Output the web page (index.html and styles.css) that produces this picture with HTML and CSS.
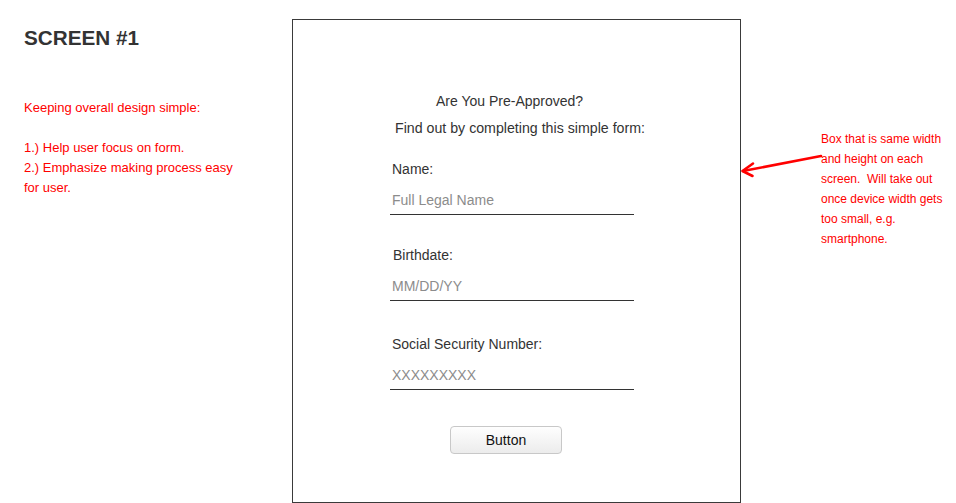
FILE: index.html
```html
<!DOCTYPE html>
<html lang="en">
<head>
<meta charset="utf-8">
<title>Screen #1</title>
<link rel="stylesheet" href="styles.css">
</head>
<body>
<div class="page">
  <aside class="left">
    <h1 class="screen-title">SCREEN #1</h1>
    <p class="note">Keeping overall design simple:<br><br>1.) Help user focus on form.<br>2.) Emphasize making process easy<br>for user.</p>
  </aside>
  <main class="frame">
    <p class="form-title">Are You Pre-Approved?</p>
    <p class="form-sub">Find out by completing this simple form:</p>
    <form class="form">
      <label class="field-label field-first" for="name">Name:</label>
      <input class="field-input" id="name" type="text" placeholder="Full Legal Name">
      <label class="field-label field-bd" for="bd">Birthdate:</label>
      <input class="field-input field-input-bd" id="bd" type="text" placeholder="MM/DD/YY">
      <label class="field-label field-ssn" for="ssn">Social Security Number:</label>
      <input class="field-input" id="ssn" type="text" placeholder="XXXXXXXXX">
      <button class="btn" type="button">Button</button>
    </form>
  </main>
  <aside class="right">
    <p class="note note-right">Box that is same width<br>and height on each<br>screen.&nbsp; Will take out<br>once device width gets<br>too small, e.g.<br>smartphone.</p>
  </aside>
  <svg class="arrow" width="90" height="34" viewBox="735 150 90 34" aria-hidden="true">
    <line x1="821" y1="156" x2="743" y2="171" stroke="#f00" stroke-width="2.6" stroke-linecap="round"/>
    <polyline points="753,163.5 742.5,171 752.5,176" fill="none" stroke="#f00" stroke-width="2.6" stroke-linecap="round" stroke-linejoin="round"/>
  </svg>
</div>
</body>
</html>
```
FILE: styles.css
```css
html, body {
  margin: 0;
  padding: 0;
  background: #fff;
}

body {
  font-family: "Liberation Sans", Arial, sans-serif;
  color: #333;
  width: 956px;
  height: 503px;
  overflow: hidden;
}

.page {
  position: relative;
  display: flex;
  align-items: flex-start;
  padding-left: 24px;
}

.left {
  width: 268px;
  flex: none;
}

.screen-title {
  margin: 26px 0 0;
  font-size: 20.7px;
  line-height: 24px;
  font-weight: bold;
  color: #333;
}

.note {
  margin: 48px 0 0;
  font-size: 13px;
  line-height: 20px;
  color: #f00;
}

.frame {
  flex: none;
  box-sizing: border-box;
  width: 449px;
  height: 484px;
  margin-top: 19px;
  border: 1px solid #3a3a3a;
  padding-top: 71px;
}

.form-title,
.form-sub {
  margin: 0;
  font-size: 14px;
  line-height: 20px;
  color: #333;
}

.form-title {
  padding-left: 143px;
}

.form-sub {
  margin-top: 7px;
  padding-left: 102px;
  font-size: 14.2px;
}

.form {
  display: flex;
  flex-direction: column;
  align-items: flex-start;
  padding-left: 97px;
}

.field-label {
  display: block;
  font-size: 14px;
  line-height: 20px;
  color: #333;
  padding-left: 2px;
}

.field-first { margin-top: 21px; }
.field-bd { margin-top: 30px; padding-left: 3px; }
.field-ssn { margin-top: 33px; }

.field-input {
  display: block;
  box-sizing: content-box;
  width: 242px;
  height: 28px;
  margin: 7px 0 0;
  padding: 0 0 0 2px;
  border: 0;
  border-bottom: 1px solid #333;
  background: transparent;
  font-family: "Liberation Sans", Arial, sans-serif;
  font-size: 14px;
  color: #333;
  outline: none;
}

.field-input-bd {
  margin-top: 6px;
  height: 29px;
}

.field-input::placeholder {
  color: #8c8c8c;
  opacity: 1;
}

.btn {
  margin: 36px 0 0 60px;
  box-sizing: border-box;
  width: 112px;
  height: 28px;
  border: 1px solid #c8c8c8;
  border-radius: 4px;
  background: linear-gradient(#fefefe, #ececec);
  font-family: "Liberation Sans", Arial, sans-serif;
  font-size: 14px;
  color: #111;
  padding: 0;
}

.right {
  flex: none;
  margin-left: 80px;
  margin-top: 129px;
}

.note-right {
  margin: 0;
  font-size: 12px;
  line-height: 20px;
}

.arrow {
  position: absolute;
  left: 735px;
  top: 150px;
}
```
